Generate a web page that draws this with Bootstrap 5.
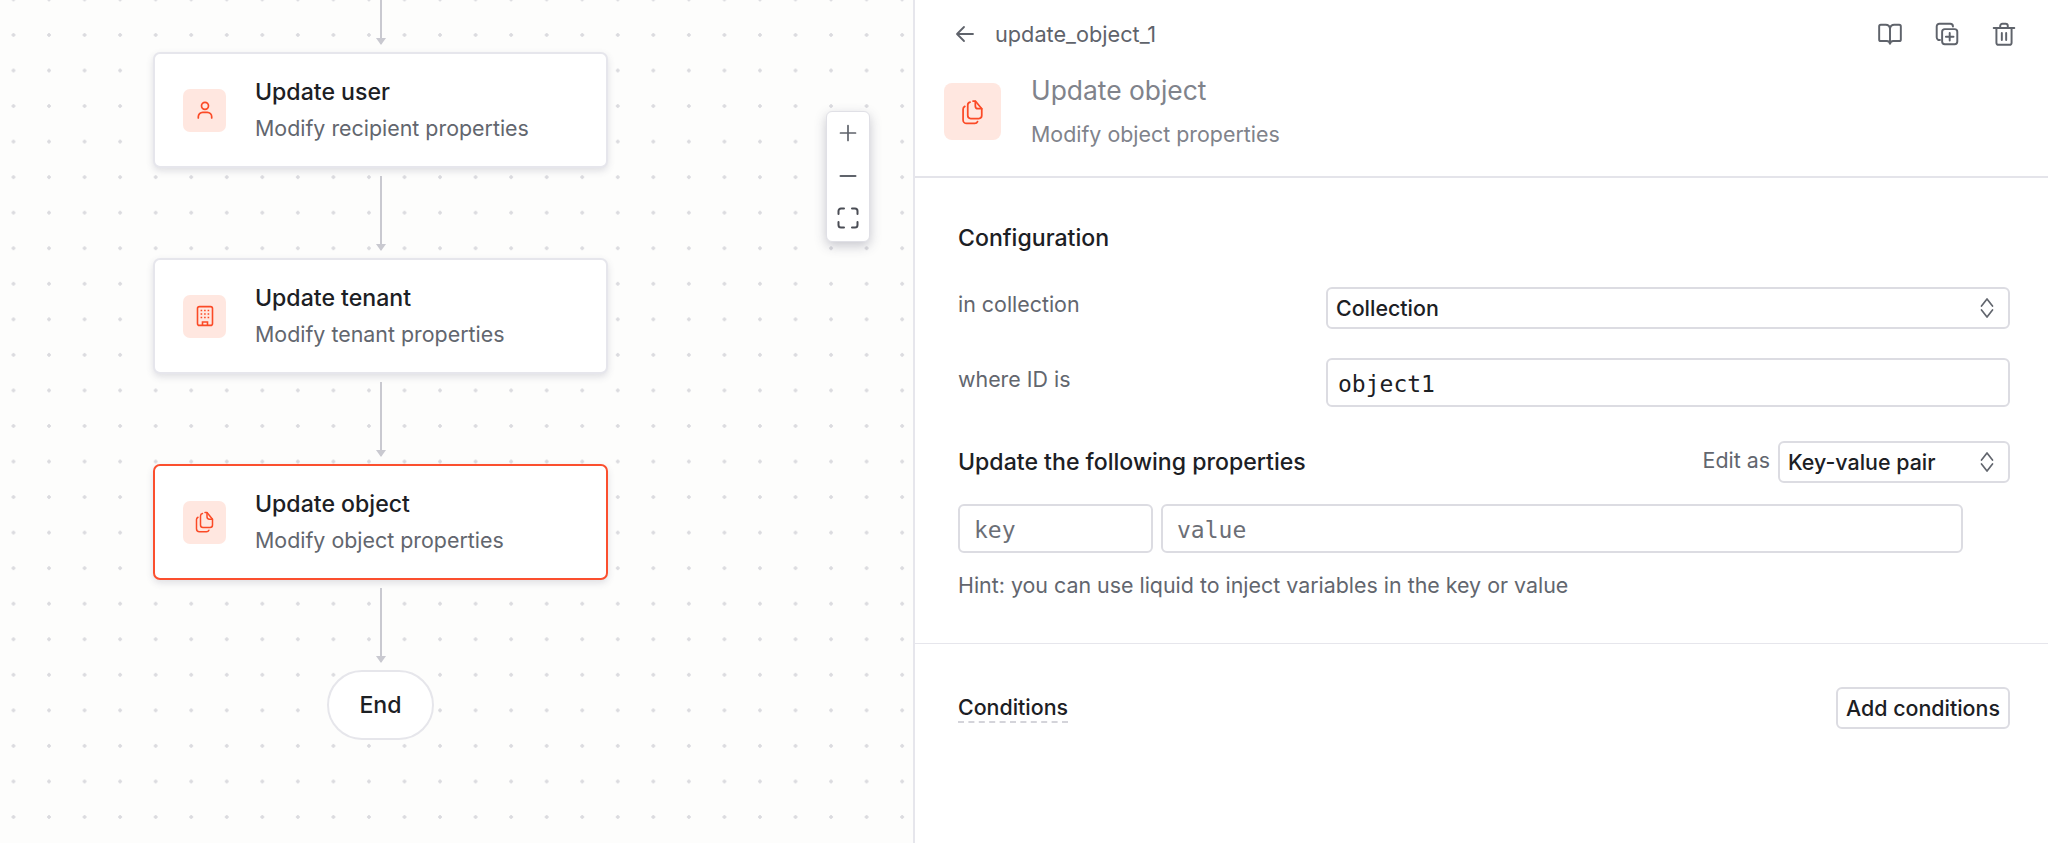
<!DOCTYPE html>
<html lang="en">
<head>
  <meta charset="UTF-8" />
  <meta name="viewport" content="width=device-width, initial-scale=1.0"/>
  <title>Workflow editor</title>
  <link href="https://cdn.jsdelivr.net/npm/bootstrap@5.3.0/dist/css/bootstrap.min.css" rel="stylesheet"/>
  <style>
    body { font-family: Inter, "Liberation Sans", sans-serif; color: #1c2024; height: 843px; overflow: hidden; }

    /* canvas */
    .flow-canvas {
      position: relative; width: 913px; height: 843px; flex: none; padding-left: 153px;
      background-color: #fdfdfc;
      background-image: radial-gradient(circle, #dbdbdf 1.5px, transparent 2px);
      background-size: 35.55px 35.55px;
      background-position: -4.3px 17.2px;
    }
    .flow-column { width: 455px; }
    .edge { width: 2px; background: #c9c9d0; position: relative; margin: 0 auto; }
    .edge::after {
      content: ""; position: absolute; left: -4px; bottom: -1px;
      border-left: 5px solid transparent; border-right: 5px solid transparent; border-top: 7px solid #c9c9d0;
    }
    .edge-top { height: 44px; margin-bottom: 8px; }
    .edge-mid { height: 74px; margin-top: 8px; margin-bottom: 8px; }
    .step-card {
      height: 116px; padding-left: 28px; gap: 29px; border: 2px solid #e6e6ec; border-radius: 7px;
      box-shadow: 0 3px 7px rgba(70, 70, 100, .16);
    }
    .step-card.is-active { border-color: #fb4f2e; }
    .tile { width: 43px; height: 43px; border-radius: 7px; background: #ffe7e0; color: #fb4a26; flex: none; }
    .tile-lg { width: 57px; height: 57px; border-radius: 8px; }
    .step-title { font-size: 23.1px; font-weight: 500; line-height: 36px; }
    .step-sub { font-size: 21.4px; line-height: 36px; color: #62666e; }
    .end-node {
      width: 107px; height: 70px; border: 2px solid #e6e6eb; border-radius: 35px; background: #fff;
      font-size: 23.1px; font-weight: 500;
    }
    .zoom-box {
      position: absolute; left: 826px; top: 111px; width: 44px; height: 131px; background: #fff;
      border: 1px solid #e0e0e6; border-radius: 6px; box-shadow: 0 4px 12px rgba(60, 60, 90, .28); color: #5f636b;
    }
    .zoom-item { height: 42.6px; }

    /* side panel */
    .side-panel { flex: 1; border-left: 2px solid #e6e6ec; background: #fff; }
    .panel-head { height: 178px; border-bottom: 2px solid #e4e4ea; padding: 0 31px 0 29px; }
    .crumb { height: 68px; padding-left: 11px; color: #5f636b; font-size: 21.7px; gap: 20px; }
    .head-actions { gap: 31px; }
    .head-row { margin-top: 15px; gap: 30px; }
    .head-text { margin-top: -7px; }
    .head-title { font-size: 26.4px; line-height: 28px; color: #80838b; }
    .head-sub { font-size: 21.4px; line-height: 28px; margin-top: 16px; color: #80838b; }
    .panel-sec { padding: 0 38px 0 43px; }
    .sec-main { height: 466px; border-bottom: 1px solid #e6e6ec; padding-top: 46px; }
    .sec-title { font-size: 23.1px; font-weight: 500; line-height: 28px; }
    .field-row { margin-top: 29px; }
    .field-first { margin-top: 35px; }
    .field-label { width: 368px; flex: none; font-size: 21.4px; color: #62666e; line-height: 28px; margin-bottom: 8px; }
    .form-select.pick, .form-control.box {
      border: 2px solid #dcdce2; border-radius: 6px; box-shadow: none; color: #1c2024;
    }
    .form-select.pick {
      height: 42px; padding: 0 40px 0 8px; font-size: 21.4px; font-weight: 500; font-family: Inter, sans-serif;
      background-position: right 12px center; background-size: 18px 22px;
      background-image: url("data:image/svg+xml,%3Csvg xmlns='http://www.w3.org/2000/svg' viewBox='0 0 18 22' fill='none' stroke='%2362666e' stroke-width='1.7' stroke-linecap='round' stroke-linejoin='round'%3E%3Cpath d='M3.5 9l5.500-7 5.500 7M3.500 13l5.500 7 5.500-7'/%3E%3C/svg%3E");
    }
    .form-control.box {
      height: 49px; padding: 2px 10px 0; font-family: "DejaVu Sans Mono", monospace; font-size: 23px;
    }
    .form-control.box::placeholder { color: #6b6e76; opacity: 1; }
    .box-pad { padding: 2px 14px 0 !important; }
    .props-row { margin-top: 34px; }
    .edit-label { font-size: 21.4px; color: #62666e; margin: 0 8px 4px 0; }
    .edit-select { width: 232px !important; }
    .key-box { width: 195px !important; flex: none; }
    .value-box { width: 802px !important; flex: none; }
    .kv-row { margin-top: 21px; gap: 8px; }
    .hint { margin-top: 18px; font-size: 21.4px; line-height: 28px; color: #62666e; }
    .sec-cond { padding-top: 43px; }
    .cond-title { font-size: 21.4px; font-weight: 500; line-height: 28px; border-bottom: 2px dashed #d4d4da; }
    .btn.add-cond {
      height: 42px; width: 174px; padding: 0; border: 2px solid #dcdce2; border-radius: 6px;
      font-size: 21.4px; font-weight: 500; color: #1c2024; background: #fff;
    }
    svg { display: block; }
  </style>
</head>
<body class="d-flex">
  <svg width="0" height="0" class="position-absolute">
    <symbol id="ico-copy" viewBox="0 0 24 24" fill="none" stroke="currentColor" stroke-width="1.5" stroke-linecap="round" stroke-linejoin="round">
      <path d="M9.500 3.500a2.500 2.500 0 0 0-2 2.400v9.200a2.500 2.500 0 0 0 2.500 2.500h7a2.500 2.500 0 0 0 2.500-2.500V9.200L14 2.600h-2"/>
      <path d="M14 2.800v4a2.400 2.400 0 0 0 2.400 2.400h3"/>
      <path d="M5 7.200A2.600 2.600 0 0 0 3.500 9.600v9.200a3 3 0 0 0 3 3h7a2.600 2.600 0 0 0 2.400-1.600"/>
    </symbol>
  </svg>

  <div class="flow-canvas">
    <div class="flow-column d-flex flex-column">
      <div class="edge edge-top"></div>

      <div class="step-card d-flex align-items-center bg-white">
        <div class="tile d-flex align-items-center justify-content-center">
          <svg width="24" height="24" viewBox="0 0 24 24" fill="none" stroke="currentColor" stroke-width="1.7" stroke-linecap="round">
            <circle cx="12" cy="7.800" r="3.500"/>
            <path d="M5.300 20v-1.200a4.400 4.400 0 0 1 4.400-4.400h4.600a4.400 4.400 0 0 1 4.400 4.400V20"/>
          </svg>
        </div>
        <div>
          <div class="step-title">Update user</div>
          <div class="step-sub">Modify recipient properties</div>
        </div>
      </div>

      <div class="edge edge-mid"></div>

      <div class="step-card d-flex align-items-center bg-white">
        <div class="tile d-flex align-items-center justify-content-center">
          <svg width="24" height="24" viewBox="0 0 24 24" fill="none" stroke="currentColor" stroke-width="1.600">
            <rect x="4.500" y="2.600" width="15" height="18.800" rx="2"/>
            <path d="M9.500 21.400v-3.400h5v3.400"/>
            <path stroke-width="1.500" stroke-dasharray="1.600 1.900" d="M7.600 6.500h9M7.600 10h9M7.600 13.600h9"/>
          </svg>
        </div>
        <div>
          <div class="step-title">Update tenant</div>
          <div class="step-sub">Modify tenant properties</div>
        </div>
      </div>

      <div class="edge edge-mid"></div>

      <div class="step-card is-active d-flex align-items-center bg-white">
        <div class="tile d-flex align-items-center justify-content-center">
          <svg width="24" height="24"><use href="#ico-copy"/></svg>
        </div>
        <div>
          <div class="step-title">Update object</div>
          <div class="step-sub">Modify object properties</div>
        </div>
      </div>

      <div class="edge edge-mid"></div>

      <div class="end-node d-flex align-items-center justify-content-center align-self-center">End</div>
    </div>

    <div class="zoom-box d-flex flex-column">
      <div class="zoom-item d-flex align-items-center justify-content-center">
        <svg width="18" height="18" viewBox="0 0 18 18" stroke="currentColor" stroke-width="1.700" stroke-linecap="round"><path d="M9 1.500v15M1.500 9h15"/></svg>
      </div>
      <div class="zoom-item d-flex align-items-center justify-content-center">
        <svg width="18" height="18" viewBox="0 0 18 18" stroke="currentColor" stroke-width="2" stroke-linecap="round"><path d="M1.500 9h15"/></svg>
      </div>
      <div class="zoom-item d-flex align-items-center justify-content-center">
        <svg width="22" height="22" viewBox="0 0 22 22" fill="none" stroke="#4a4d55" stroke-width="2" stroke-linecap="round" stroke-linejoin="round"><path d="M1.500 7V4a2.500 2.500 0 0 1 2.500-2.500h3M15 1.500h3A2.500 2.500 0 0 1 20.500 4v3M20.500 15v3a2.500 2.500 0 0 1-2.500 2.500h-3M7 20.500H4A2.500 2.500 0 0 1 1.500 18v-3"/></svg>
      </div>
    </div>
  </div>

  <div class="side-panel d-flex flex-column">
    <div class="panel-head">
      <div class="crumb d-flex align-items-center">
        <svg width="20" height="20" viewBox="0 0 20 20" fill="none" stroke="currentColor" stroke-width="1.800" stroke-linecap="round" stroke-linejoin="round"><path d="M18 10H2.500M9 3l-7 7 7 7"/></svg>
        <span>update_object_1</span>
        <div class="head-actions d-flex align-items-center ms-auto">
          <svg width="26" height="26" viewBox="0 0 24 24" fill="none" stroke="currentColor" stroke-width="1.800" stroke-linecap="round" stroke-linejoin="round">
            <path d="M12 7a4 4 0 0 0-4-3.500H3.500a1.500 1.500 0 0 0-1.500 1.500v12a1.500 1.500 0 0 0 1.500 1.500H9a3 3 0 0 1 3 2.500 3 3 0 0 1 3-2.500h5.500a1.500 1.500 0 0 0 1.500-1.500V5a1.500 1.500 0 0 0-1.500-1.500H16A4 4 0 0 0 12 7zM12 7v14"/>
          </svg>
          <svg width="26" height="26" viewBox="0 0 24 24" fill="none" stroke="currentColor" stroke-width="1.800" stroke-linecap="round" stroke-linejoin="round">
            <path d="M5.500 17.500A2.500 2.500 0 0 1 2.500 15V5A2.500 2.500 0 0 1 5 2.500h10A2.500 2.500 0 0 1 17.500 5"/>
            <rect x="7.500" y="7.500" width="14" height="14" rx="2.500"/>
            <path d="M14.500 11v7M11 14.500h7"/>
          </svg>
          <svg width="26" height="26" viewBox="0 0 24 24" fill="none" stroke="currentColor" stroke-width="1.800" stroke-linecap="round" stroke-linejoin="round">
            <path d="M2.500 6.500h19M8.500 6V4.500a2 2 0 0 1 2-2h3a2 2 0 0 1 2 2V6M5 6.500V20a2 2 0 0 0 2 2h10a2 2 0 0 0 2-2V6.500M10 11v6.500M14 11v6.500"/>
          </svg>
        </div>
      </div>
      <div class="head-row d-flex">
        <div class="tile tile-lg d-flex align-items-center justify-content-center">
          <svg width="28" height="28"><use href="#ico-copy"/></svg>
        </div>
        <div class="head-text">
          <div class="head-title">Update object</div>
          <div class="head-sub">Modify object properties</div>
        </div>
      </div>
    </div>

    <div class="panel-sec sec-main">
      <div class="sec-title">Configuration</div>
      <div class="field-row field-first d-flex align-items-center">
        <div class="field-label">in collection</div>
        <select class="form-select pick"><option>Collection</option></select>
      </div>
      <div class="field-row d-flex align-items-center">
        <div class="field-label">where ID is</div>
        <input class="form-control box" type="text" value="object1">
      </div>
      <div class="props-row d-flex align-items-center">
        <div class="sec-title">Update the following properties</div>
        <div class="edit-label ms-auto">Edit as</div>
        <select class="form-select pick edit-select"><option>Key-value pair</option></select>
      </div>
      <div class="kv-row d-flex">
        <input class="form-control box box-pad key-box" type="text" placeholder="key">
        <input class="form-control box box-pad value-box" type="text" placeholder="value">
      </div>
      <div class="hint">Hint: you can use liquid to inject variables in the key or value</div>
    </div>

    <div class="panel-sec sec-cond d-flex align-items-center justify-content-between">
      <div class="cond-title">Conditions</div>
      <button type="button" class="btn add-cond">Add conditions</button>
    </div>
  </div>

  <script src="https://cdn.jsdelivr.net/npm/bootstrap@5.3.0/dist/js/bootstrap.bundle.min.js"></script>
</body>
</html>
